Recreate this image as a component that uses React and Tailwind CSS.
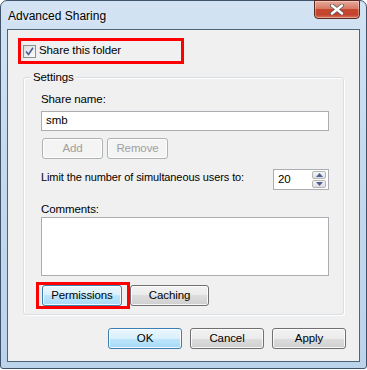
import React from "react";

const font = { fontFamily: '"Liberation Sans", Arial, sans-serif' };

function Btn({ children, w, primary, disabled, blue }) {
  let cls =
    "h-[21px] rounded-[3px] border text-[11.5px] tracking-[-0.1px] flex items-center justify-center shadow-[inset_0_0_0_1px_rgba(255,255,255,0.8)] ";
  if (disabled) {
    cls += "border-[#adb2b5] bg-[#f4f4f4] text-[#a0a0a0]";
  } else if (primary || blue) {
    cls +=
      "border-[#3c7fb1] bg-[linear-gradient(to_bottom,#eaf6fd_0%,#d9f0fc_50%,#bee6fd_50%,#a7d9f5_100%)] text-black";
  } else {
    cls +=
      "border-[#707070] bg-[linear-gradient(to_bottom,#f2f2f2_0%,#ebebeb_50%,#dddddd_50%,#cfcfcf_100%)] text-black";
  }
  return (
    <div className={cls} style={{ width: w }}>
      {children}
    </div>
  );
}

export default function App() {
  return (
    <div className="w-[367px] h-[370px] bg-white" style={font}>
      <div className="w-[367px] h-[369px] rounded-t-[7px] rounded-b-[3px] border border-[#3f5469] bg-[linear-gradient(to_bottom,#d3e3f4_0%,#c6daef_40%,#bcd3ec_100%)] px-[6px] pb-[6px] flex flex-col">
        <div className="h-[28px] flex items-center relative">
          <span className="text-[12px] text-black pl-[1px] pt-[1px] [text-shadow:0_0_6px_rgba(255,255,255,0.9)]">
            Advanced Sharing
          </span>
          <div className="absolute right-[0px] top-[-1px] w-[46px] h-[19px] rounded-b-[4px] border border-[#5a2a22] bg-[linear-gradient(to_bottom,#e8a898_0%,#d77a66_45%,#c8462f_50%,#c2432d_80%,#d8755c_100%)] flex items-center justify-center shadow-[inset_0_0_0_1px_rgba(255,255,255,0.35)]">
            <svg width="14" height="11" viewBox="0 0 14 11">
              <path
                d="M2 1.5 L12 9.5 M12 1.5 L2 9.5"
                stroke="#5a5a5a"
                strokeWidth="4"
                strokeLinecap="round"
              />
              <path
                d="M2 1.5 L12 9.5 M12 1.5 L2 9.5"
                stroke="#ffffff"
                strokeWidth="2.4"
                strokeLinecap="round"
              />
            </svg>
          </div>
        </div>
        <div className="flex-1 border border-[#4f6377] bg-[#f0f0f0] flex flex-col text-[11px] tracking-[-0.1px]">
          <div className="ml-[10px] mt-[8px] w-[166px] h-[26px] border-[3px] border-[#ff0000] flex items-center pl-[2px]">
            <div className="w-[13px] h-[13px] border border-[#8e8f8f] bg-[linear-gradient(135deg,#dcdcdc,#fcfcfc)] flex items-center justify-center">
              <svg width="9" height="9" viewBox="0 0 9 9">
                <path
                  d="M1 4.5 L3.5 7.5 L8 0.8"
                  stroke="#4a5f97"
                  strokeWidth="1.6"
                  fill="none"
                />
              </svg>
            </div>
            <span className="ml-[3px] text-[11.5px] text-black">Share this folder</span>
          </div>

          <div className="relative ml-[15px] mt-[13px] w-[321px] h-[238px] rounded-[3px] border border-[#d5dfe5] shadow-[inset_1px_1px_0_#ffffff,1px_1px_0_#ffffff] pl-[17px] pt-[14px] flex flex-col">
            <span className="absolute left-[7px] top-[-8px] bg-[#f0f0f0] px-[2px] text-[11.5px] leading-[15px] text-black">
              Settings
            </span>
            <span className="text-[11.5px] leading-[15px] text-black">Share name:</span>
            <div className="mt-[4px] w-[288px] h-[20px] border border-[#abadb3] bg-white flex items-center pl-[4px] text-[11.5px] text-black">
              smb
            </div>
            <div className="mt-[7px] ml-[1px] flex gap-[4px]">
              <Btn w={61} disabled>
                Add
              </Btn>
              <Btn w={61} disabled>
                Remove
              </Btn>
            </div>
            <div className="mt-[10px] flex items-center w-[288px] justify-between">
              <span className="text-[11px] leading-[15px] text-black -mt-[4px]">
                Limit the number of simultaneous users to:
              </span>
              <div className="w-[56px] h-[21px] border border-[#abadb3] bg-white flex items-stretch">
                <span className="flex-1 text-[11.5px] text-black pl-[4px] flex items-center">20</span>
                <div className="w-[14px] my-[1px] mr-[2px] flex flex-col gap-[1px]">
                  <div className="flex-1 border border-[#b5b5b5] rounded-[2px] bg-[linear-gradient(to_bottom,#f5f5f5,#dedede)] flex items-center justify-center">
                    <svg width="7" height="4" viewBox="0 0 7 4">
                      <path d="M0 4 L3.5 0 L7 4 Z" fill="#4c6094" />
                    </svg>
                  </div>
                  <div className="flex-1 border border-[#b5b5b5] rounded-[2px] bg-[linear-gradient(to_bottom,#f5f5f5,#dedede)] flex items-center justify-center">
                    <svg width="7" height="4" viewBox="0 0 7 4">
                      <path d="M0 0 L3.5 4 L7 0 Z" fill="#4c6094" />
                    </svg>
                  </div>
                </div>
              </div>
            </div>
            <span className="mt-[12px] text-[11.5px] leading-[15px] text-black">Comments:</span>
            <div className="w-[288px] h-[59px] border border-[#abadb3] bg-white"></div>
            <div className="mt-[9px] ml-[1px] flex gap-[8px]">
              <div className="relative">
                <Btn w={80} blue>
                  Permissions
                </Btn>
                <div className="absolute left-[-6px] top-[-3px] w-[94px] h-[27px] border-[3px] border-[#ff0000] pointer-events-none"></div>
              </div>
              <Btn w={79}>Caching</Btn>
            </div>
          </div>

          <div className="mt-[13px] ml-[100px] flex gap-[8px]">
            <Btn w={74} primary>
              OK
            </Btn>
            <Btn w={74}>Cancel</Btn>
            <Btn w={74}>Apply</Btn>
          </div>
        </div>
      </div>
    </div>
  );
}
